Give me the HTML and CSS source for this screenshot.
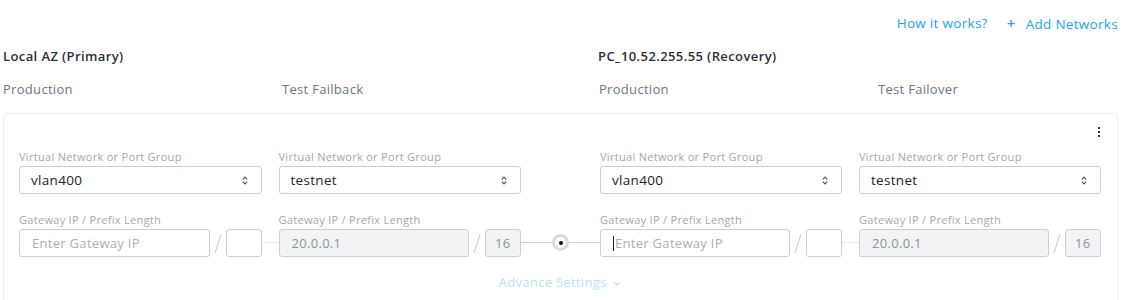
FILE: index.html
```html
<!DOCTYPE html>
<html lang="en">
<head>
  <meta charset="UTF-8" />
  <title>Network Mapping</title>
  <link rel="stylesheet" href="styles.css">
</head>
<body>
  <div class="page">
    <!-- Top links -->
    <div class="toolbar">
      <a class="link" href="#">How it works?</a>
      <a class="link" href="#"><span class="plus">+</span>Add Networks</a>
    </div>

    <!-- Site titles -->
    <div class="sites">
      <div class="site-title primary">Local AZ (Primary)</div>
      <div class="site-title">PC_10.52.255.55 (Recovery)</div>
    </div>

    <div class="subheads">
      <div class="subhead w1">Production</div>
      <div class="subhead w2">Test Failback</div>
      <div class="subhead w1">Production</div>
      <div class="subhead">Test Failover</div>
    </div>

    <!-- Mapping card -->
    <section class="card">
      <div class="card-top">
        <span class="kebab"><i></i><i></i><i></i></span>
      </div>

      <div class="row">
        <div class="pair left">
          <div class="col">
            <div class="label">Virtual Network or Port Group</div>
            <div class="select">vlan400<svg class="arrows" width="6" height="9" viewBox="0 0 6 9"><path d="M0.8 3.4 L3 1.2 L5.2 3.4 M0.8 5.6 L3 7.8 L5.2 5.6" fill="none" stroke="#555" stroke-width="1.2"/></svg></div>
          </div>
          <div class="spacer"></div>
          <div class="col">
            <div class="label">Virtual Network or Port Group</div>
            <div class="select">testnet<svg class="arrows" width="6" height="9" viewBox="0 0 6 9"><path d="M0.8 3.4 L3 1.2 L5.2 3.4 M0.8 5.6 L3 7.8 L5.2 5.6" fill="none" stroke="#555" stroke-width="1.2"/></svg></div>
          </div>
        </div>
        <div class="middle"></div>
        <div class="pair right">
          <div class="col">
            <div class="label">Virtual Network or Port Group</div>
            <div class="select">vlan400<svg class="arrows" width="6" height="9" viewBox="0 0 6 9"><path d="M0.8 3.4 L3 1.2 L5.2 3.4 M0.8 5.6 L3 7.8 L5.2 5.6" fill="none" stroke="#555" stroke-width="1.2"/></svg></div>
          </div>
          <div class="spacer"></div>
          <div class="col">
            <div class="label">Virtual Network or Port Group</div>
            <div class="select">testnet<svg class="arrows" width="6" height="9" viewBox="0 0 6 9"><path d="M0.8 3.4 L3 1.2 L5.2 3.4 M0.8 5.6 L3 7.8 L5.2 5.6" fill="none" stroke="#555" stroke-width="1.2"/></svg></div>
          </div>
        </div>
      </div>

      <div class="row gateway">
        <div class="pair left">
          <div class="col">
            <div class="label">Gateway IP / Prefix Length</div>
            <div class="ip-line">
              <div class="field placeholder">Enter Gateway IP</div>
              <svg class="slash" width="16" height="28" viewBox="0 0 16 28"><line x1="11" y1="5" x2="5" y2="24" stroke="#c3c9d0" stroke-width="1"/></svg>
              <div class="field prefix"></div>
            </div>
          </div>
          <div class="spacer line"></div>
          <div class="col">
            <div class="label">Gateway IP / Prefix Length</div>
            <div class="ip-line">
              <div class="field disabled">20.0.0.1</div>
              <svg class="slash" width="16" height="28" viewBox="0 0 16 28"><line x1="11" y1="5" x2="5" y2="24" stroke="#c3c9d0" stroke-width="1"/></svg>
              <div class="field prefix disabled">16</div>
            </div>
          </div>
        </div>
        <div class="middle connector">
          <span class="node"></span>
        </div>
        <div class="pair right">
          <div class="col">
            <div class="label">Gateway IP / Prefix Length</div>
            <div class="ip-line">
              <div class="field placeholder"><span class="caret"></span>Enter Gateway IP</div>
              <svg class="slash" width="16" height="28" viewBox="0 0 16 28"><line x1="11" y1="5" x2="5" y2="24" stroke="#c3c9d0" stroke-width="1"/></svg>
              <div class="field prefix"></div>
            </div>
          </div>
          <div class="spacer line"></div>
          <div class="col">
            <div class="label">Gateway IP / Prefix Length</div>
            <div class="ip-line">
              <div class="field disabled">20.0.0.1</div>
              <svg class="slash" width="16" height="28" viewBox="0 0 16 28"><line x1="11" y1="5" x2="5" y2="24" stroke="#c3c9d0" stroke-width="1"/></svg>
              <div class="field prefix disabled">16</div>
            </div>
          </div>
        </div>
      </div>

      <div class="advance">Advance Settings
        <svg width="8" height="6" viewBox="0 0 8 6"><path d="M1.5 1.5 L4 4 L6.5 1.5" fill="none" stroke="#b9def8" stroke-width="1.3"/></svg>
      </div>
    </section>
  </div>
</body>
</html>
```

FILE: styles.css
```css
body {
  margin: 0;
  padding: 0;
  background: #fff;
  font-family: "Open Sans", Arial, sans-serif;
  color: #303540;
  letter-spacing: 0.3px;
  overflow: hidden;
}

.page {
  padding: 0 7px 0 3px;
}

/* Top links */
.toolbar {
  display: flex;
  justify-content: flex-end;
  align-items: center;
  height: 46px;
  gap: 19px;
}

.link {
  color: #22a3f5;
  font-size: 13.5px;
  text-decoration: none;
}

.plus {
  font-weight: 600;
  margin-right: 10px;
  font-size: 15px;
}

/* Titles */
.sites {
  display: flex;
  height: 20px;
  align-items: center;
}

.site-title {
  font-size: 13px;
  font-weight: 600;
  letter-spacing: 0.4px;
  color: #2c3038;
}

.site-title.primary {
  width: 595px;
}

.subheads {
  display: flex;
  height: 20px;
  align-items: center;
  margin-top: 13px;
}

.subhead {
  font-size: 13px;
  color: #6c7785;
}

.subhead.w1 {
  width: 279px;
}

.subhead.w2 {
  width: 317px;
}

/* Card */
.card {
  margin-top: 14px;
  border: 1px solid #eceef1;
  border-radius: 4px;
  padding: 0 16px 0 15px;
  height: 200px;
}

.card-top {
  display: flex;
  justify-content: flex-end;
  height: 36px;
  align-items: center;
}

.kebab {
  display: flex;
  flex-direction: column;
  gap: 2px;
  margin-right: 1px;
}

.kebab i {
  display: block;
  width: 2px;
  height: 2px;
  background: #333;
}

.row {
  display: flex;
}

.row.gateway {
  margin-top: 19px;
}

.pair {
  display: flex;
}

.pair.left {
  width: 502px;
}

.pair.right {
  width: 501px;
}

.col {
  flex: 1;
}

.spacer {
  width: 17px;
  position: relative;
}

.spacer.line::after {
  content: "";
  position: absolute;
  left: 0;
  right: 0;
  bottom: 14px;
  border-top: 1px solid #e6e8eb;
}

.middle {
  width: 79px;
  position: relative;
}

.connector::before {
  content: "";
  position: absolute;
  left: 0;
  right: 0;
  bottom: 14px;
  border-top: 1px solid #ccd1d6;
}

.node {
  position: absolute;
  left: 31px;
  bottom: 6px;
  width: 11px;
  height: 11px;
  border: 3px solid #d7dbe0;
  border-radius: 50%;
  background: #fff;
}

.node::after {
  content: "";
  position: absolute;
  left: 3.5px;
  top: 3.5px;
  width: 4px;
  height: 4px;
  border-radius: 50%;
  background: #111;
}

.label {
  font-size: 11px;
  line-height: 14px;
  color: #a0a9b4;
  margin-bottom: 2px;
}

.select {
  height: 28px;
  box-sizing: border-box;
  border: 1px solid #c9ced5;
  border-radius: 3px;
  display: flex;
  align-items: center;
  justify-content: space-between;
  padding: 0 13px 0 11px;
  font-size: 13.5px;
  color: #1f2228;
}

.ip-line {
  display: flex;
  align-items: center;
}

.field {
  flex: 1;
  height: 28px;
  box-sizing: border-box;
  border: 1px solid #c9ced5;
  border-radius: 3px;
  display: flex;
  align-items: center;
  padding: 0 12px;
  font-size: 13px;
  color: #1f2228;
}

.field.placeholder {
  color: #a7b0ba;
}

.field.disabled {
  background: #f2f3f5;
  color: #8a949f;
}

.field.prefix {
  flex: none;
  width: 36px;
  padding: 0 9px;
}

.slash {
  flex: none;
}

.caret {
  display: inline-block;
  width: 1px;
  height: 15px;
  background: #222;
  margin-right: 1px;
}

.advance {
  text-align: center;
  margin-top: 16px;
  font-size: 13px;
  color: #b9def8;
}

.advance svg {
  margin-left: 3px;
  vertical-align: middle;
}
```
